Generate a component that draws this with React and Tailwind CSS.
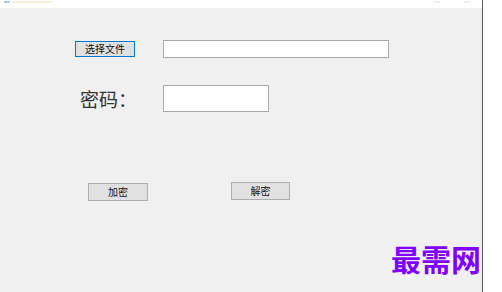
import React from 'react';

const cjk = { fontFamily: '"Noto Sans CJK SC", sans-serif' };

const Button = ({ children, focused, className = '' }) => (
    <button
        className={`flex items-center justify-center bg-[#e1e1e1] text-[10px] leading-none text-[#111] border ${focused ? 'border-[#0078d7]' : 'border-[#adadad]'} ${className}`}
        style={cjk}
    >
        {children}
    </button>
);

const App = () => {
    return (
        <div className="flex h-[292px] w-[502px] bg-white" style={cjk}>
            <div className="flex w-[482px] flex-col">
                {/* Title bar */}
                <div className="flex h-[8px] items-start justify-between bg-white px-1">
                    <div className="flex gap-[2px] pt-[1px]">
                        <div className="h-[2px] w-[6px] bg-[#b5c6e0]" />
                        <div className="h-[2px] w-[40px] bg-[#f5f1dc]" />
                    </div>
                    <div className="mr-2 flex gap-6 pt-[1px]">
                        <div className="h-[2px] w-[6px] bg-[#ededed]" />
                        <div className="h-[2px] w-[6px] bg-[#ededed]" />
                    </div>
                </div>

                {/* Form area */}
                <div className="relative flex flex-1 flex-col bg-[#f0f0f0]">
                    <div className="mt-[32px] flex items-center">
                        <Button focused className="ml-[75px] h-[16px] w-[60px]">选择文件</Button>
                        <div className="ml-[28px] h-[18px] w-[226px] border border-[#a9a9a9] bg-white" />
                    </div>

                    <div className="mt-[27px] flex items-center">
                        <span className="ml-[80px] w-[83px] text-[19px] leading-none text-[#333]">密码：</span>
                        <div className="h-[27px] w-[106px] border border-[#a9a9a9] bg-white" />
                    </div>

                    <div className="mt-[70px] flex items-start">
                        <Button className="ml-[88px] mt-[1px] h-[18px] w-[60px]">加密</Button>
                        <Button className="ml-[83px] h-[18px] w-[59px]">解密</Button>
                    </div>

                    {/* Watermark */}
                    <span className="absolute left-[391px] top-[235px] text-[30px] font-semibold leading-none text-[#8000ff]">
                        最需网
                    </span>
                </div>
            </div>
            <div className="w-px bg-[#5c5c5c]" />
            <div className="flex-1 bg-white" />
        </div>
    );
};

export default App;
